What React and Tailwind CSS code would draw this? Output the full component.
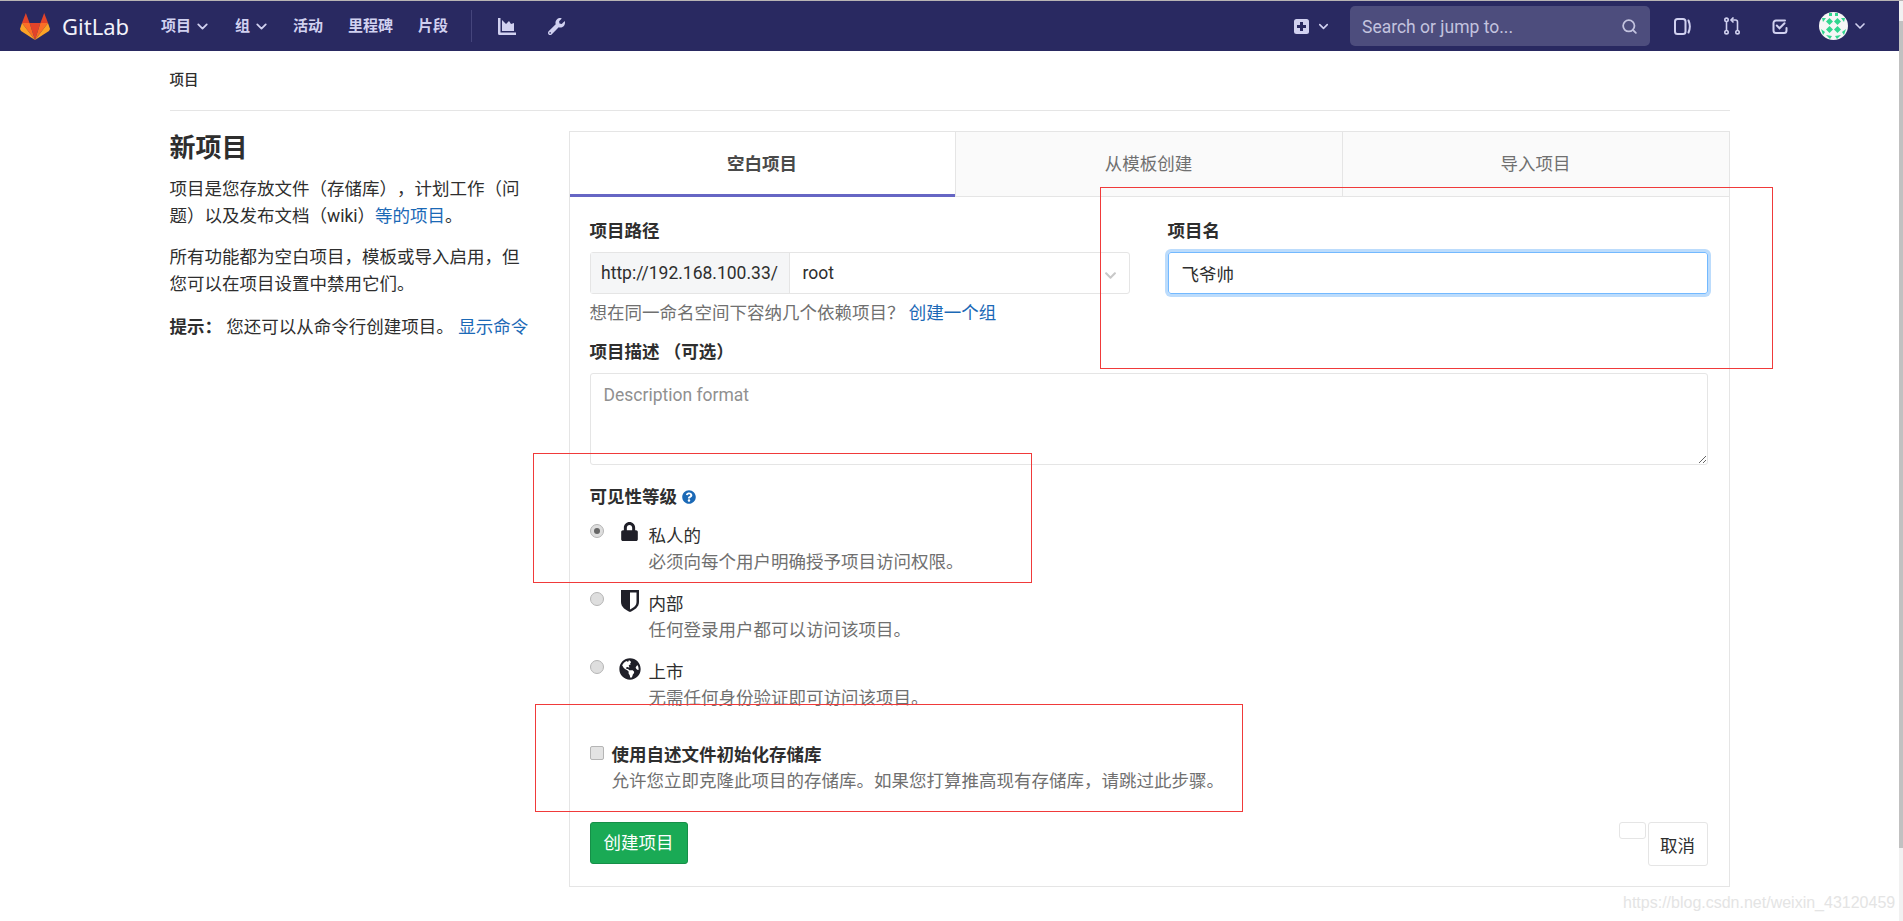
import { ChevronDown, Search } from 'lucide-react'
import { FaChevronDown, FaGlobeAmericas, FaLock, FaQuestionCircle, FaWrench } from 'react-icons/fa'

const font = "font-['Roboto','Noto_Sans_CJK_SC',sans-serif]"

function Tanuki() {
  return (
    <svg width="30" height="27" viewBox="0 0 30 27" className="ml-5 shrink-0">
      <polygon points="15,27 9.6,10 20.4,10" fill="#e24329" />
      <polygon points="15,27 9.6,10 2,10" fill="#fc6d26" />
      <polygon points="15,27 20.4,10 28,10" fill="#fc6d26" />
      <polygon points="2,10 0,16 1,18 15,27" fill="#fca326" />
      <polygon points="28,10 30,16 29,18 15,27" fill="#fca326" />
      <polygon points="2,10 5.8,0 9.6,10" fill="#e24329" />
      <polygon points="28,10 24.2,0 20.4,10" fill="#e24329" />
    </svg>
  )
}

function ChartIcon() {
  return (
    <svg width="18" height="17" viewBox="0 0 18 17" className="ml-[26px] shrink-0" fill="#d1d1f0">
      <path d="M0 0h2.5v14.5H18V17H1.5A1.5 1.5 0 0 1 0 15.5V0z" />
      <path d="M4 13V2l4 4 3-3 2 3 3-1v8H4z" />
    </svg>
  )
}

function PlusBox() {
  return (
    <svg width="15" height="15" viewBox="0 0 15 15" className="shrink-0">
      <rect width="15" height="15" rx="2.5" fill="#d1d1f0" />
      <path d="M6 3h3v3h3v3H9v3H6V9H3V6h3z" fill="#292961" />
    </svg>
  )
}

function IssuesIcon() {
  return (
    <svg width="17" height="17" viewBox="0 0 17 17" className="ml-6 shrink-0" fill="none" stroke="#d1d1f0" strokeWidth="2">
      <rect x="1" y="1" width="10.5" height="15" rx="2.5" />
      <path d="M14.5 2.5c1.6 3.6 1.6 8.4 0 12" strokeLinecap="round" />
    </svg>
  )
}

function MergeIcon() {
  return (
    <svg width="16" height="18" viewBox="0 0 16 18" className="ml-[33px] shrink-0" fill="none" stroke="#d1d1f0" strokeWidth="1.6">
      <circle cx="2.5" cy="2.8" r="1.7" />
      <circle cx="2.5" cy="15.2" r="1.7" />
      <circle cx="13.5" cy="15.2" r="1.7" />
      <path d="M2.5 4.5v9M13.5 13.5V5a2 2 0 0 0-2-2H8" />
      <path d="M9.5 0.5 7 3l2.5 2.5" />
    </svg>
  )
}

function TodoIcon() {
  return (
    <svg width="16" height="15" viewBox="0 0 16 15" className="ml-8 shrink-0" fill="none" stroke="#d1d1f0" strokeWidth="2">
      <path d="M14.5 9v2.5a2.5 2.5 0 0 1-2.5 2.5H4a2.5 2.5 0 0 1-2.5-2.5V4A2.5 2.5 0 0 1 4 1.500h9" strokeLinecap="round" />
      <path d="M4.800 6.500 7.500 9.300 12.500 4.200" strokeLinecap="round" />
    </svg>
  )
}

function Avatar() {
  const blobs = [
    'M10.500 6l3.500 3.500-3.500 3.500L7 9.500z',
    'M18.500 6l3.500 3.500-3.500 3.500L15 9.500z',
    'M10.500 14l3.500 3.500-3.500 3.500L7 17.500z',
    'M18.500 14l3.500 3.500-3.500 3.500L15 17.500z',
    'M3 6h4l-3 4z',
    'M26 6h-4l3 4z',
    'M2 17l4 3-2 3z',
    'M27 17l-4 3 2 3z',
    'M10 1h3v3h-3z',
    'M16 1h3v3h-3z',
    'M7 23l6 1-2 3z',
    'M22 23l-6 1 2 3z',
  ]
  return (
    <svg width="29" height="28" viewBox="0 0 29 28" className="ml-[31px] shrink-0">
      <ellipse cx="14.500" cy="14" rx="14.500" ry="14" fill="#f6f6f6" />
      {blobs.map((d) => (
        <path key={d} d={d} fill="#30d68f" />
      ))}
    </svg>
  )
}

function ShieldIcon() {
  return (
    <svg width="18" height="22" viewBox="0 0 18 22" className="shrink-0">
      <path d="M0 0h18v12c0 5-4.500 8-9 10-4.500-2-9-5-9-10V0z" fill="#1f1f28" />
      <path d="M9 2.500h6.500V12c0 3.500-3 5.800-6.500 7.400V2.500z" fill="#fff" />
    </svg>
  )
}

function NavBar() {
  return (
    <header className="flex h-[50px] items-center bg-[#292961] text-[15px] font-semibold text-[#d1d1f0]">
      <Tanuki />
      <span className="ml-3 font-['Noto_Sans',sans-serif] text-[22px] leading-none font-normal text-[#f2f2fa]">GitLab</span>
      <span className="ml-[32px]">项目</span>
      <ChevronDown size={17} strokeWidth={2.500} className="ml-[3px] shrink-0" />
      <span className="ml-[24px]">组</span>
      <ChevronDown size={17} strokeWidth={2.500} className="ml-[3px] shrink-0" />
      <span className="ml-[23px]">活动</span>
      <span className="ml-[25px]">里程碑</span>
      <span className="ml-[25px]">片段</span>
      <div className="ml-[23px] h-[32px] w-px bg-[#45457c]" />
      <ChartIcon />
      <FaWrench size={17} className="ml-[32px] shrink-0" />
      <div className="ml-auto flex items-center">
        <PlusBox />
        <ChevronDown size={15} strokeWidth={2.500} className="ml-[7px] shrink-0" />
        <div className="ml-[19px] flex h-[40px] w-[300px] items-center justify-between rounded-[5px] bg-[#4d4d7d] pr-[12px] pl-[12px]">
          <span className="pt-[2px] text-[17.500px] font-normal text-[#c3c3df]">Search or jump to...</span>
          <Search size={17} strokeWidth={2.500} className="text-[#c3c3df]" />
        </div>
        <IssuesIcon />
        <MergeIcon />
        <TodoIcon />
        <Avatar />
        <ChevronDown size={16} strokeWidth={2.500} className="mr-[31px] ml-[4px] shrink-0" />
      </div>
    </header>
  )
}

function Sidebar() {
  return (
    <aside className="w-[399px] shrink-0 text-[17.500px] leading-[27px] text-[#2e2e2e]">
      <h1 className="mb-[11px] text-[26px] leading-[34px] font-bold">新项目</h1>
      <p className="mb-[14px] w-[365px]">
        <span className="block">项目是您存放文件（存储库），计划工作（问</span>
        <span className="block">
          题）以及发布文档（wiki）<span className="text-[#1b69b6]">等的项目</span>。
        </span>
      </p>
      <p className="mb-[16px] w-[365px]">所有功能都为空白项目，模板或导入启用，但您可以在项目设置中禁用它们。</p>
      <p className="whitespace-nowrap">
        <b>提示：</b> 您还可以从命令行创建项目。 <span className="text-[#1b69b6]">显示命令</span>
      </p>
    </aside>
  )
}

function Tabs() {
  return (
    <div className="grid h-[65px] grid-cols-[385px_1fr_1fr] text-center text-[17.500px] text-[#707070]">
      <div className="flex items-center justify-center border-b-[3px] border-[#6666c4] pt-[2px] font-bold text-[#4a4a4a]">空白项目</div>
      <div className="flex items-center justify-center border-b border-l border-[#e5e5e5] bg-[#fafafa]">从模板创建</div>
      <div className="flex items-center justify-center border-b border-l border-[#e5e5e5] bg-[#fafafa]">导入项目</div>
    </div>
  )
}

function VisibilityOption({ icon, title, desc, checked }) {
  return (
    <div className="mb-4 flex">
      <span className="mt-[1px] flex h-[14px] w-[14px] shrink-0 items-center justify-center rounded-full border border-[#b5b5b5] bg-[#dedede]">
        {checked && <span className="h-[6px] w-[6px] rounded-full bg-[#666]" />}
      </span>
      <span className="-mt-px ml-[15px] flex h-fit w-[22px] shrink-0 justify-center">{icon}</span>
      <div className="ml-[8px] leading-[26px]">
        <div className="text-[#2e2e2e]">{title}</div>
        <div className="text-[#707070]">{desc}</div>
      </div>
    </div>
  )
}

function ProjectForm() {
  return (
    <form className="pt-[22px] pr-[21px] pb-[20px] pl-[20px] text-[17.500px] leading-6 text-[#2e2e2e]">
      <div className="grid grid-cols-2 gap-x-[38px]">
        <div>
          <label className="mb-[9px] block font-bold">项目路径</label>
          <div className="flex h-[42px] rounded-[3px] border border-[#e5e5e5]">
            <span className="flex w-[199px] shrink-0 items-center justify-center border-r border-[#e5e5e5] bg-[#f5f6f7] whitespace-nowrap">http://192.168.100.33/</span>
            <span className="flex flex-1 items-center justify-between pr-[12px] pl-[13px]">
              root
              <FaChevronDown size={13} className="mt-1 text-[#c8c8c8]" />
            </span>
          </div>
          <p className="mt-[7px] whitespace-nowrap text-[#707070]">
            想在同一命名空间下容纳几个依赖项目？ <span className="text-[#1b69b6]">创建一个组</span>
          </p>
        </div>
        <div>
          <label className="mb-[9px] block font-bold">项目名</label>
          <input
            readOnly
            value="飞爷帅"
            className="h-[42px] w-full rounded-[3px] border border-[#73b9ff] px-[13px] text-[#2e2e2e] shadow-[0_0_0_3px_#bcdcfc] outline-none"
          />
        </div>
      </div>

      <label className="mt-[15px] mb-[9px] block font-bold">项目描述 （可选）</label>
      <textarea
        placeholder="Description format"
        className="block h-[92px] w-full rounded-[3px] border border-[#e5e5e5] px-[13px] pt-[9px] pb-[6px] outline-none placeholder:text-[#909090]"
      />

      <label className="mt-[20px] mb-[14px] flex items-center font-bold">
        可见性等级
        <FaQuestionCircle size={14} className="ml-[5px] text-[#1b69b6]" />
      </label>
      <VisibilityOption checked icon={<FaLock size={19} color="#1f1f28" />} title="私人的" desc="必须向每个用户明确授予项目访问权限。" />
      <VisibilityOption icon={<ShieldIcon />} title="内部" desc="任何登录用户都可以访问该项目。" />
      <VisibilityOption icon={<FaGlobeAmericas size={22} color="#1f1f28" />} title="上市" desc="无需任何身份验证即可访问该项目。" />

      <div className="mt-[31px] flex leading-[26px]">
        <span className="mt-[4px] h-[14px] w-[14px] shrink-0 rounded-[2px] border border-[#b5b5b5] bg-[#e3e3e3]" />
        <div className="ml-2">
          <div className="font-bold">使用自述文件初始化存储库</div>
          <div className="text-[#707070]">允许您立即克隆此项目的存储库。如果您打算推高现有存储库，请跳过此步骤。</div>
        </div>
      </div>

      <div className="mt-[28px] flex items-start justify-between">
        <button type="button" className="h-[42px] w-[98px] rounded-[3px] border border-[#168f48] bg-[#1aaa55] text-white">创建项目</button>
        <div className="flex items-start gap-[2px]">
          <span className="h-[17px] w-[27px] rounded-[3px] border border-[#e5e5e5]" />
          <button type="button" className="h-[44px] w-[60px] rounded-[3px] border border-[#e5e5e5] pt-[3px] text-[#2e2e2e]">取消</button>
        </div>
      </div>
    </form>
  )
}

export default function App() {
  return (
    <div className={`relative h-[921px] overflow-hidden bg-white [text-spacing-trim:space-all] ${font}`}>
      <div className="h-px bg-[#b8b4b4]" />
      <div className="flex">
        <div className="min-w-0 flex-1">
          <NavBar />
          <main className="mx-auto w-[1560px]">
            <div className="flex h-[60px] items-center border-b border-[#e5e5e5] pt-[1px] text-[14.500px] font-medium text-[#2e2e2e]">项目</div>
            <div className="mt-5 flex">
              <Sidebar />
              <section className="w-[1161px] border border-[#e5e5e5]">
                <Tabs />
                <ProjectForm />
              </section>
            </div>
          </main>
        </div>
        <div className="h-[920px] w-[4px] shrink-0 bg-[#f1f1f1] pt-[20px]">
          <div className="h-[827px] bg-[#c1c1c1]" />
        </div>
      </div>

      {/* 红框标注 */}
      <div className="pointer-events-none absolute top-[187px] left-[1100px] h-[182px] w-[673px] border border-[#f03a3a]" />
      <div className="pointer-events-none absolute top-[453px] left-[533px] h-[130px] w-[499px] border border-[#f03a3a]" />
      <div className="pointer-events-none absolute top-[704px] left-[535px] h-[108px] w-[708px] border border-[#f03a3a]" />
      <span className="absolute top-[891px] left-[1623px] font-['Liberation_Sans',sans-serif] text-[16px] whitespace-nowrap text-[#e4e4e4]">https://blog.csdn.net/weixin_43120459</span>
    </div>
  )
}
